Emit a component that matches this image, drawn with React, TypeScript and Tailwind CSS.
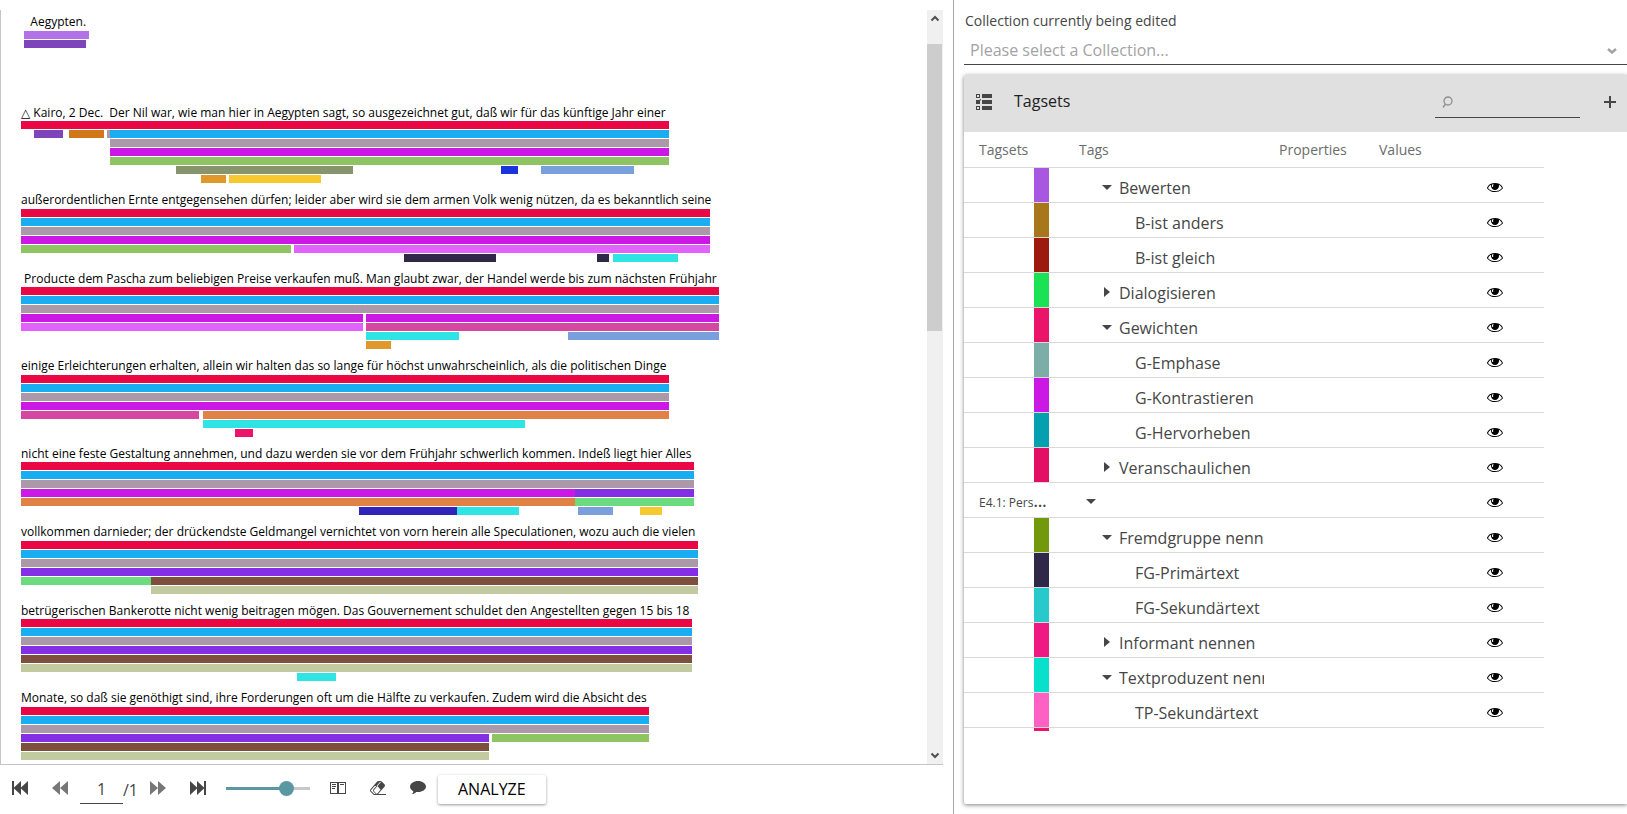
import { useState } from 'react';
import type { ReactNode } from 'react';

type Segment = [start: number, end: number, color: string];
type Line = { text: string; rows: Segment[][] };

const RED = '#e90843';
const BLUE = '#19adf2';
const GREY = '#ab99aa';
const MAGENTA = '#cb18e5';
const GREEN = '#8fc462';
const PINK = '#e263fb';
const ROSE = '#d548a2';
const CYAN = '#2fe4e4';
const SKY = '#7a9fdd';
const AMBER = '#e1982a';
const YELLOW = '#f6ca2f';
const ORANGE = '#e08145';
const NIGHT = '#302848';
const VIOLET = '#842fe5';
const MINT = '#6cdb80';
const BROWN = '#7c503d';
const KHAKI = '#c2ca9f';
const PURPLE = '#7e45ba';

// one full-width bar per color
const stack = (end: number, ...colors: string[]): Segment[][] => colors.map((c) => [[0, end, c]]);

const lines: Line[] = [
  {
    text: '△ Kairo, 2 Dec.  Der Nil war, wie man hier in Aegypten sagt, so ausgezeichnet gut, daß wir für das künftige Jahr einer',
    rows: [
      [[0, 648, RED]],
      [[13, 42, PURPLE], [48, 83, '#d07718'], [86, 89, GREY], [89, 648, BLUE]],
      [[89, 648, GREY]],
      [[89, 648, MAGENTA]],
      [[89, 648, GREEN]],
      [[155, 332, '#87946c'], [480, 497, '#1b33dc'], [520, 613, SKY]],
      [[180, 205, AMBER], [208, 300, YELLOW]],
    ],
  },
  {
    text: 'außerordentlichen Ernte entgegensehen dürfen; leider aber wird sie dem armen Volk wenig nützen, da es bekanntlich seine',
    rows: [
      ...stack(689, RED, BLUE, GREY, MAGENTA),
      [[0, 270, GREEN], [273, 689, PINK]],
      [[383, 475, NIGHT], [576, 588, NIGHT], [592, 657, CYAN]],
    ],
  },
  {
    text: ' Producte dem Pascha zum beliebigen Preise verkaufen muß. Man glaubt zwar, der Handel werde bis zum nächsten Frühjahr',
    rows: [
      ...stack(698, RED, BLUE, GREY),
      [[0, 342, MAGENTA], [345, 698, MAGENTA]],
      [[0, 342, PINK], [345, 698, ROSE]],
      [[345, 438, CYAN], [547, 698, SKY]],
      [[345, 370, AMBER]],
    ],
  },
  {
    text: 'einige Erleichterungen erhalten, allein wir halten das so lange für höchst unwahrscheinlich, als die politischen Dinge',
    rows: [
      ...stack(648, RED, BLUE, GREY, MAGENTA),
      [[0, 178, ROSE], [182, 648, ORANGE]],
      [[182, 504, CYAN]],
      [[214, 232, '#ed146d']],
    ],
  },
  {
    text: 'nicht eine feste Gestaltung annehmen, und dazu werden sie vor dem Frühjahr schwerlich kommen. Indeß liegt hier Alles',
    rows: [
      ...stack(673, RED, BLUE, GREY),
      [[0, 554, MAGENTA], [554, 673, VIOLET]],
      [[0, 554, ORANGE], [554, 673, MINT]],
      [[338, 436, '#3025b8'], [436, 498, CYAN], [557, 592, SKY], [619, 641, YELLOW]],
    ],
  },
  {
    text: 'vollkommen darnieder; der drückendste Geldmangel vernichtet von vorn herein alle Speculationen, wozu auch die vielen',
    rows: [
      ...stack(677, RED, BLUE, GREY, VIOLET),
      [[0, 130, MINT], [130, 677, BROWN]],
      [[130, 677, KHAKI]],
    ],
  },
  {
    text: 'betrügerischen Bankerotte nicht wenig beitragen mögen. Das Gouvernement schuldet den Angestellten gegen 15 bis 18',
    rows: [...stack(671, RED, BLUE, GREY, VIOLET, BROWN, KHAKI), [[276, 315, CYAN]]],
  },
  {
    text: 'Monate, so daß sie genöthigt sind, ihre Forderungen oft um die Hälfte zu verkaufen. Zudem wird die Absicht des',
    rows: [
      ...stack(628, RED, BLUE, GREY),
      [[0, 468, VIOLET], [471, 628, GREEN]],
      ...stack(468, BROWN, KHAKI),
    ],
  },
];

type Tag = { name: string; color?: string; level: number; open?: boolean };

const tags: Tag[] = [
  { name: 'Bewerten', color: '#a857e0', level: 1, open: true },
  { name: 'B-ist anders', color: '#a8771b', level: 2 },
  { name: 'B-ist gleich', color: '#9d1a0e', level: 2 },
  { name: 'Dialogisieren', color: '#1be154', level: 1, open: false },
  { name: 'Gewichten', color: '#ea146b', level: 1, open: true },
  { name: 'G-Emphase', color: '#7cada7', level: 2 },
  { name: 'G-Kontrastieren', color: '#cb18e5', level: 2 },
  { name: 'G-Hervorheben', color: '#05a0af', level: 2 },
  { name: 'Veranschaulichen', color: '#e30f65', level: 1, open: false },
  { name: 'E4.1: Pers', level: 0, open: true },
  { name: 'Fremdgruppe nennen', color: '#72990b', level: 1, open: true },
  { name: 'FG-Primärtext', color: '#302848', level: 2 },
  { name: 'FG-Sekundärtext', color: '#28c9cb', level: 2 },
  { name: 'Informant nennen', color: '#ef1a81', level: 1, open: false },
  { name: 'Textproduzent nennen', color: '#07e1cb', level: 1, open: true },
  { name: 'TP-Sekundärtext', color: '#ff60c4', level: 2 },
  { name: '', color: '#ee1466', level: 2 },
];

function Icon({ children }: { children: ReactNode }) {
  return (
    <svg viewBox="0 0 16 16" fill="currentColor" className="size-4 shrink-0" aria-hidden="true">
      {children}
    </svg>
  );
}

const EyeIcon = () => (
  <Icon>
    <path d="M8 3.9c-6.7 0-8 5.1-8 5.1s2.2 4.1 7.9 4.1 8.1-4 8.1-4-1.3-5.2-8-5.2zM5.3 5.4c0.5-0.3 1.3-0.3 1.3-0.3s-0.5 0.9-0.5 1.6c0 0.7 0.2 1.1 0.2 1.1l-1.1 0.2c0 0-0.3-0.5-0.3-1.2 0-0.8 0.4-1.4 0.4-1.4zM7.9 12.1c-4.1 0-6.2-2.3-6.8-3.2 0.3-0.7 1.1-2.2 3.1-3.2-0.1 0.4-0.2 0.8-0.2 1.3 0 2.2 1.8 4 4 4s4-1.8 4-4c0-0.5-0.1-0.9-0.2-1.3 2 0.9 2.8 2.5 3.1 3.2-0.7 0.9-2.8 3.2-7 3.2z" />
  </Icon>
);

function ToolButton({ label, faded, children }: { label: string; faded?: boolean; children: ReactNode }) {
  return (
    <button aria-label={label} className={`flex h-[26px] w-10 items-center justify-center ${faded ? 'text-[#777]' : 'text-[#464646]'}`}>
      <Icon>{children}</Icon>
    </button>
  );
}

function AnnotatedLine({ line }: { line: Line }) {
  return (
    <div className="group">
      <p className="h-[26px] pt-[9px] text-xs leading-4 whitespace-pre text-black group-odd:h-[25px]">{line.text}</p>
      <div className="flex flex-col gap-px">
        {line.rows.map((row, r) => (
          <div key={r} className="flex h-2">
            {row.map(([start, end, color], i) => (
              <span
                key={i}
                className="shrink-0"
                style={{ marginLeft: start - (i ? row[i - 1][1] : 0), width: end - start, backgroundColor: color }}
              />
            ))}
          </div>
        ))}
      </div>
    </div>
  );
}

function Scrollbar() {
  return (
    <div className="flex w-4 shrink-0 flex-col bg-[#f0f0f0] text-[#505050]">
      <svg viewBox="0 0 16 17" className="h-[17px] w-4" fill="none" stroke="currentColor" strokeWidth="2">
        <path d="M4.5 10.5 8 7l3.500 3.500" />
      </svg>
      <div className="mt-[17px] mb-auto h-[38%] w-[15px] bg-[#cdcdcd]" />
      <svg viewBox="0 0 16 17" className="h-[17px] w-4" fill="none" stroke="currentColor" strokeWidth="2">
        <path d="M4.500 6.500 8 10l3.500-3.500" />
      </svg>
    </div>
  );
}

function Toolbar() {
  const [page, setPage] = useState('1');
  const [zoom, setZoom] = useState(77);
  return (
    <div className="flex h-[49px] shrink-0 items-start pt-[10px] text-[#464646]">
      <ToolButton label="First page">
        <path d="M0 1h2v6.600L9 1v6.400L16 1v14L9 8.600V15L2 8.400V15H0z" />
      </ToolButton>
      <ToolButton label="Previous page" faded>
        <path d="M8 1v14L0 8zM16 1v14L8 8z" />
      </ToolButton>
      <input
        aria-label="Page"
        value={page}
        onChange={(e) => setPage(e.target.value)}
        className="h-[29px] w-[43px] border-b border-[#464646] bg-transparent text-center text-base leading-7 outline-none"
      />
      <span className="w-[15px] text-base leading-[30px]">/1</span>
      <ToolButton label="Next page" faded>
        <path d="M0 1v14l8-7zM8 1v14l8-7z" />
      </ToolButton>
      <ToolButton label="Last page">
        <path d="M16 1h-2v6.600L7 1v6.400L0 1v14l7-6.400V15l7-6.600V15h2z" />
      </ToolButton>
      <div className="mx-2 flex h-[27px] w-[84px] items-center">
        <input
          type="range"
          aria-label="Page size"
          value={zoom}
          onChange={(e) => setZoom(Number(e.target.value))}
          className="h-[15px] w-full appearance-none bg-transparent [&::-webkit-slider-runnable-track]:h-[3px] [&::-webkit-slider-runnable-track]:bg-linear-to-r [&::-webkit-slider-runnable-track]:from-[#5a98a1] [&::-webkit-slider-runnable-track]:from-70% [&::-webkit-slider-runnable-track]:to-[#c8c8c8] [&::-webkit-slider-runnable-track]:to-70% [&::-webkit-slider-thumb]:-mt-1.5 [&::-webkit-slider-thumb]:size-[15px] [&::-webkit-slider-thumb]:appearance-none [&::-webkit-slider-thumb]:rounded-full [&::-webkit-slider-thumb]:bg-[#5a98a1]"
        />
      </div>
      <ToolButton label="Columns">
        <path fillRule="evenodd" d="M0 2h16v12H0zM1 3v10h6V3zM9 3v10h6V3z" />
        <path d="M2 4h4v1H2zM2 6h4v1H2zM2 8h3v1H2zM10 4h4v1h-4z" />
      </ToolButton>
      <ToolButton label="Clear search highlights">
        <path d="M8.1 14l6.4-7.2c0.6-0.7 0.6-1.8-0.1-2.5l-2.7-2.7c-0.3-0.4-0.8-0.6-1.3-0.6h-1.8c-0.5 0-1 0.2-1.4 0.6l-6.7 7.6c-0.6 0.7-0.6 1.9 0.1 2.5l2.7 2.7c0.3 0.4 0.8 0.6 1.3 0.6h11.4v-1h-7.9zM6.8 13.9c0 0 0-0.1 0 0l-2.7-2.7c-0.4-0.4-0.4-0.9 0-1.3l3.4-3.9h-1l-3 3.3c-0.6 0.7-0.6 1.7 0.1 2.4l2.3 2.3h-1.3c-0.2 0-0.4-0.1-0.6-0.2l-2.8-2.8c-0.3-0.3-0.3-0.8 0-1.1l3.5-3.9h1.8l3.5-4h1l-3.5 4 3.1 3.7-3.5 4c-0.1 0.1-0.2 0.1-0.3 0.2z" />
      </ToolButton>
      <ToolButton label="Comments">
        <path d="M8 1c4.400 0 8 2.500 8 5.500S12.400 12 8 12c-.6 0-1.200 0-1.800-.1C5 13.200 3.600 14 2 14c.9-.6 1.400-1.600 1.300-2.800C1.300 10.200 0 8.500 0 6.500 0 3.500 3.600 1 8 1z" />
      </ToolButton>
      <button className="h-[29px] rounded-xs bg-white px-5 pb-px text-base leading-7 text-black shadow-[0_1px_3px_rgba(0,0,0,0.4)]">ANALYZE</button>
    </div>
  );
}

function Caret({ open }: { open?: boolean }) {
  return (
    <svg viewBox="0 0 10 10" className="size-[10px] shrink-0" fill="currentColor" aria-hidden="true">
      {open ? <path d="M0 3h10L5 8z" /> : <path d="M2 0v10l6-5z" />}
    </svg>
  );
}

function TagRow({ tag }: { tag: Tag }) {
  const cell = 'h-[35px] border-b border-[#d9d9d9] p-0';
  return (
    <tr>
      <td className={cell}>
        {tag.color ? (
          <div className="ml-[70px] h-[34px] w-[15px]" style={{ backgroundColor: tag.color }} />
        ) : (
          <div className="h-[34px] pt-1 pl-[15px] leading-7 whitespace-nowrap">
            <span className="text-xs">{tag.name}</span>
            <span className="font-semibold">…</span>
          </div>
        )}
      </td>
      <td className={cell}>
        <div className="h-[34px] overflow-hidden pt-1.5 leading-7 whitespace-nowrap">
          {tag.level === 0 && (
            <button aria-label="Toggle tagset" className="ml-[22px] flex h-7 items-center pb-1">
              <Caret open={tag.open} />
            </button>
          )}
          {tag.level === 1 && (
            <button className="ml-[38px] flex h-7 items-center gap-[7px]">
              <span className="flex pb-[3px]">
                <Caret open={tag.open} />
              </span>
              {tag.name}
            </button>
          )}
          {tag.level === 2 && <span className="ml-[71px]">{tag.name}</span>}
        </div>
      </td>
      <td className={cell} />
      <td className={cell} />
      <td className={cell}>
        <div className="flex h-[34px] justify-center pt-[11px] pl-0.5 text-black">
          <button aria-label={`Show ${tag.name}`} className="h-4">
            <EyeIcon />
          </button>
        </div>
      </td>
    </tr>
  );
}

function TagsetPanel() {
  return (
    <section className="mt-[10px] mb-[10px] flex min-h-0 flex-1 flex-col rounded-l-xs bg-white shadow-[0_1px_4px_rgba(0,0,0,0.5)]">
      <header className="flex h-[57px] shrink-0 items-center rounded-tl-xs bg-[#e0e0e0] pr-[9px] pb-[3px] pl-3 text-[#464646]">
        <Icon>
          <path d="M6 0h10v4H6zM6 6h10v4H6zM6 12h10v4H6z" />
          <path d="M0 0v4h4V0zm3 3H1V1h2zM0 12v4h4v-4zm3 3H1v-2h2zM0 6v4h4V7.200L5 5.500 4.200 5 3.500 6z" />
        </Icon>
        <h2 className="ml-[22px] pb-[3px] text-base text-[#222]">Tagsets</h2>
        <label className="ml-auto flex h-8 w-[145px] items-center border-b border-[#464646] pl-[7px]">
          <svg viewBox="0 0 11 12" className="h-3 w-[11px] shrink-0" fill="none" stroke="#8e8e8e" strokeWidth="1.3">
            <circle cx="6" cy="5" r="4" />
            <path d="M3.500 8 1 11.500" />
          </svg>
          <input aria-label="Search" className="w-full min-w-0 bg-transparent px-1 text-base outline-none" />
        </label>
        <button aria-label="Add tagset" className="ml-[22px] flex size-4 items-center justify-center">
          <svg viewBox="0 0 12 12" className="size-3" fill="currentColor">
            <path d="M5 0h2v5h5v2H7v5H5V7H0V5h5z" />
          </svg>
        </button>
      </header>
      <div className="mb-[73px] min-h-0 flex-1 overflow-hidden">
        <table className="w-[580px] table-fixed border-separate border-spacing-0 text-left text-base text-[#464646]">
          <thead>
            <tr className="text-sm text-[#6c6c6c] [&>th]:h-9 [&>th]:border-b [&>th]:border-[#d9d9d9] [&>th]:p-0 [&>th]:pl-[15px] [&>th]:font-normal">
              <th className="w-[100px]">Tagsets</th>
              <th className="w-[200px]">Tags</th>
              <th className="w-[100px]">Properties</th>
              <th className="w-[80px]">Values</th>
              <th className="w-[100px]" />
            </tr>
          </thead>
          <tbody>
            {tags.map((tag, i) => (
              <TagRow key={i} tag={tag} />
            ))}
          </tbody>
        </table>
      </div>
    </section>
  );
}

export default function App() {
  return (
    <main className="grid h-screen grid-cols-[953fr_1px_673fr] overflow-hidden bg-white font-['Open_Sans','Noto_Sans','DejaVu_Sans',sans-serif]">
      <div className="flex min-h-0 min-w-0 flex-col pt-[10px]">
        <div className="mr-[10px] flex min-h-0 flex-1 border-b border-l border-[#c5c5c5]">
          <div className="min-w-0 flex-1 overflow-hidden pl-5">
            <p className="h-[21px] pt-0.5 text-xs leading-5 whitespace-pre text-black">{'   Aegypten.'}</p>
            <div className="mb-12 flex flex-col gap-px pl-[3px]">
              <div className="h-2 w-[65px] bg-[#b272e8]" />
              <div className="h-2 w-[62px] bg-[#7e45ba]" />
            </div>
            <div>
              {lines.map((line) => (
                <AnnotatedLine key={line.text} line={line} />
              ))}
            </div>
          </div>
          <Scrollbar />
        </div>
        <Toolbar />
      </div>
      <div className="bg-[#a7a7a7]" />
      <div className="flex min-h-0 min-w-0 flex-col pl-[10px]">
        <label htmlFor="collection" className="mt-[10px] pl-px text-sm leading-[21px] text-[#464646]">
          Collection currently being edited
        </label>
        <div className="relative mt-1">
          <select
            id="collection"
            className="block h-[30px] w-full appearance-none border-b border-[#464646] bg-transparent pl-1.5 text-base text-[#a3a3a3] outline-none"
          >
            <option>Please select a Collection...</option>
          </select>
          <svg viewBox="0 0 10 6" className="pointer-events-none absolute top-[13px] right-[10px] h-1.5 w-[10px]" fill="none" stroke="#a3a3a3" strokeWidth="2.5">
            <path d="M1 1l4 3.500L9 1" />
          </svg>
        </div>
        <TagsetPanel />
      </div>
    </main>
  );
}
